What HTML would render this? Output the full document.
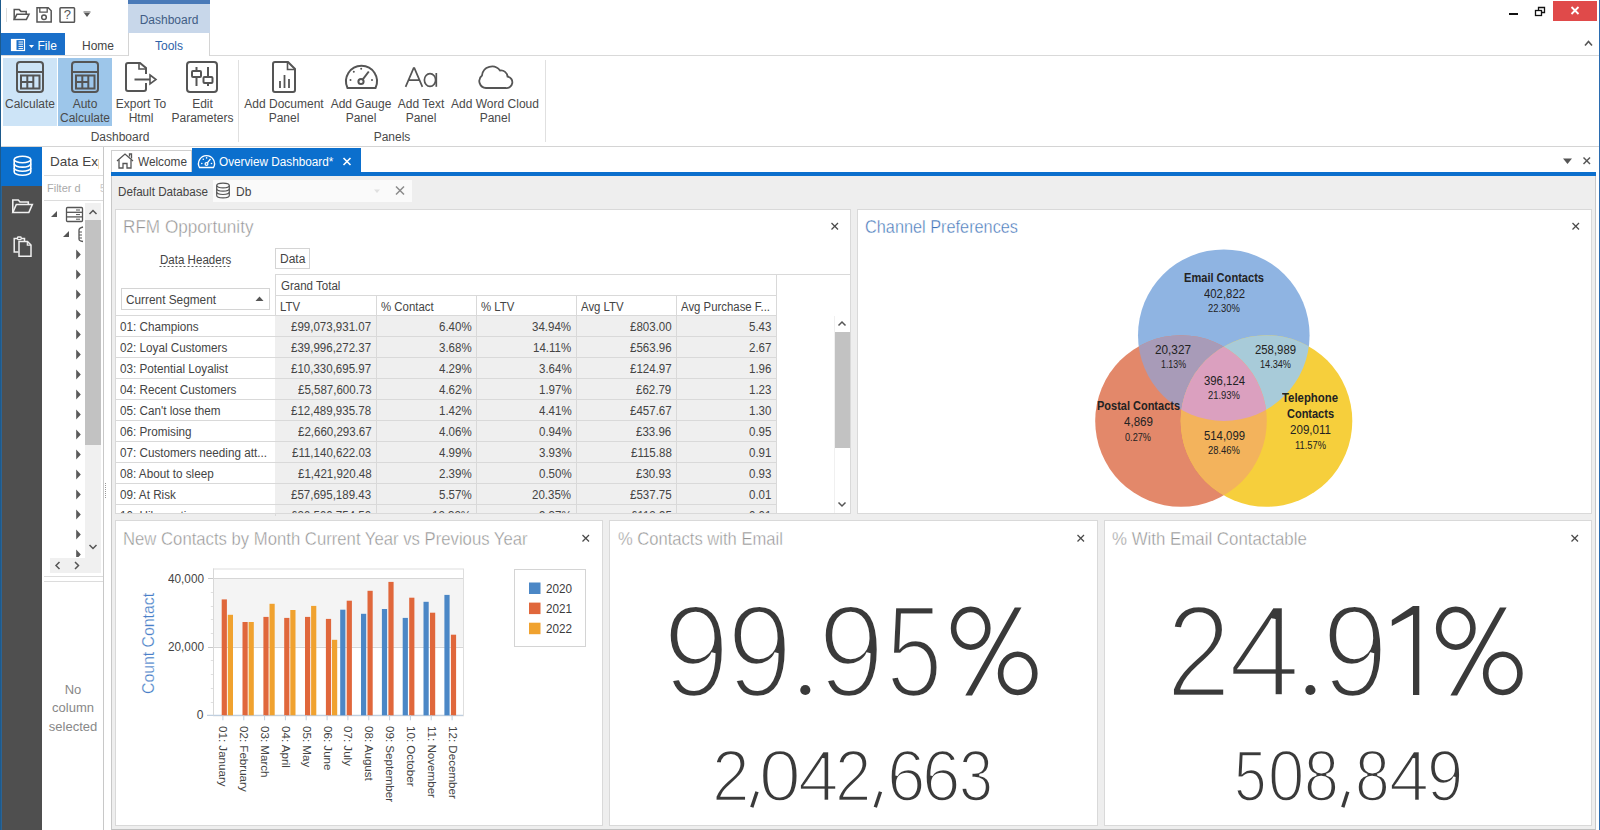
<!DOCTYPE html>
<html><head><meta charset="utf-8">
<style>
*{box-sizing:border-box;margin:0;padding:0}
html,body{width:1600px;height:830px;overflow:hidden;background:#fff;font-family:"Liberation Sans",sans-serif;color:#333}
.a{position:absolute}
.t{position:absolute;white-space:nowrap;line-height:1}
svg{position:absolute;overflow:visible}
</style></head><body>
<div class="a" style="left:0px;top:0px;width:1px;height:830px;background:#1d5a8c;"></div>
<div class="a" style="left:1599px;top:0px;width:1px;height:830px;background:#2b6cb0;"></div>
<svg style="left:0;top:0" width="100" height="30" fill="none" stroke="#555" stroke-width="1.5">
<line x1="6.5" y1="8" x2="6.5" y2="22" stroke="#ddd" stroke-width="1"/>
<path d="M14.2 19.4 V9.6 H19.2 L21 11.4 H26.2 V14"/>
<path d="M14.2 19.4 L16.9 14.3 H29 L26.4 19.4 Z"/>
<path d="M37 7.8 H48.2 L51.2 10.8 V22 H37 Z"/>
<path d="M39.8 7.8 V12.2 H47.2 V7.8" stroke-width="1.3"/>
<circle cx="44" cy="17.3" r="2.3"/>
<rect x="60" y="7.8" width="14.5" height="14.5" rx="0.8"/>
<path d="M84 13 H90 L87 17 Z" fill="#555" stroke="none"/>
<line x1="83.5" y1="12" x2="90.5" y2="12" stroke-width="1"/>
</svg>
<div class="t" style="left:63.69px;top:8.49px;font-size:13.00px;color:#555;">?</div>
<div class="a" style="left:1509px;top:13px;width:9px;height:2px;background:#111;"></div>
<svg style="left:1530px;top:0" width="20" height="20" fill="none" stroke="#111" stroke-width="1.3">
<rect x="5.5" y="10.5" width="6" height="5"/><path d="M8.5 10.5 V7.5 H14.5 V12.5 H11.5"/></svg>
<div class="a" style="left:1553px;top:1px;width:44px;height:20px;background:#e04a4a;"></div>
<svg style="left:1553px;top:1px" width="44" height="20" stroke="#fff" stroke-width="1.8">
<line x1="18.5" y1="6" x2="25.5" y2="13"/><line x1="25.5" y1="6" x2="18.5" y2="13"/></svg>
<svg style="left:1580px;top:35px" width="16" height="16" fill="none" stroke="#555" stroke-width="1.6">
<path d="M5 10.5 L8.5 6.5 L12 10.5"/></svg>
<div class="a" style="left:128px;top:0px;width:82px;height:4px;background:#4a7ab8;"></div>
<div class="a" style="left:128px;top:4px;width:82px;height:29px;background:#c8d7ea;"></div>
<div class="t" style="left:139.65px;top:13.64px;font-size:12.00px;color:#415d85;">Dashboard</div>
<div class="a" style="left:1px;top:33px;width:64px;height:22px;background:#1a6fc9;"></div>
<svg style="left:0;top:33px" width="65" height="22">
<rect x="11.5" y="6.5" width="13" height="11" fill="none" stroke="#fff" stroke-width="1.2"/>
<rect x="12" y="7" width="4.5" height="10" fill="#fff"/>
<line x1="18.5" y1="9" x2="23" y2="9" stroke="#fff" stroke-width="1"/>
<line x1="18.5" y1="11.2" x2="23" y2="11.2" stroke="#fff" stroke-width="1"/>
<line x1="18.5" y1="13.4" x2="23" y2="13.4" stroke="#fff" stroke-width="1"/>
<line x1="18.5" y1="15.6" x2="23" y2="15.6" stroke="#fff" stroke-width="1"/>
<path d="M29 12 H34 L31.5 15 Z" fill="#fff"/></svg>
<div class="t" style="left:37.50px;top:39.84px;font-size:12.00px;color:#fff;">File</div>
<div class="t" style="left:82.00px;top:39.84px;font-size:12.00px;color:#444;">Home</div>
<div class="a" style="left:128px;top:33px;width:82px;height:23px;background:#fff;border-left:1px solid #d4d4d4;border-right:1px solid #d4d4d4"></div>
<div class="t" style="left:154.99px;top:39.84px;font-size:12.00px;color:#2e62a8;">Tools</div>
<div class="a" style="left:1px;top:55px;width:127px;height:1px;background:#d9d9d9;"></div>
<div class="a" style="left:210px;top:55px;width:1389px;height:1px;background:#d9d9d9;"></div>
<div class="a" style="left:3px;top:58px;width:54px;height:68px;background:#cde4f7;"></div>
<div class="a" style="left:58px;top:58px;width:54px;height:68px;background:#9dc6ea;"></div>
<svg class="a" style="left:0;top:0" width="600" height="146" viewBox="0 0 600 146" fill="none" stroke="#555" stroke-width="2">
 <!-- calc -->
 <rect x="17" y="62" width="26" height="30" rx="3"/>
 <line x1="17" y1="72" x2="43" y2="72"/>
 <rect x="21" y="75.5" width="18.5" height="13"/>
 <line x1="27.3" y1="75.5" x2="27.3" y2="88.5"/><line x1="33.3" y1="75.5" x2="33.3" y2="88.5"/>
 <line x1="21" y1="82" x2="33.3" y2="82"/>
 <!-- auto calc -->
 <rect x="72" y="62" width="26" height="30" rx="3"/>
 <line x1="72" y1="72" x2="98" y2="72"/>
 <rect x="76" y="75.5" width="18.5" height="13"/>
 <line x1="82.3" y1="75.5" x2="82.3" y2="88.5"/><line x1="88.3" y1="75.5" x2="88.3" y2="88.5"/>
 <line x1="76" y1="82" x2="88.3" y2="82"/>
 <!-- export -->
 <path d="M146 74 V68 L140 63 H128 Q126 63 126 65 V89 Q126 91 128 91 H144 Q146 91 146 89 V83"/>
 <path d="M139 63 V69 H146" stroke-width="1.6"/>
 <line x1="134.5" y1="79.5" x2="150" y2="79.5"/>
 <path d="M150 75 L156 79.5 L150 84 Z" stroke-width="1.6"/>
 <!-- edit params -->
 <rect x="187" y="62" width="30" height="30" rx="3"/>
 <line x1="196.5" y1="67" x2="196.5" y2="86"/>
 <rect x="192" y="71" width="9" height="6" rx="1" fill="#fff"/>
 <line x1="208" y1="67" x2="208" y2="86"/>
 <rect x="203.5" y="77" width="9" height="6" rx="1" fill="#fff"/>
 <!-- doc -->
 <path d="M288 62 H275 Q273 62 273 64 V90 Q273 92 275 92 H293 Q295 92 295 90 V69 Z"/>
 <path d="M287.5 62 V69.5 H295" stroke-width="1.6"/>
 <line x1="280" y1="81" x2="280" y2="88" stroke-width="1.8"/>
 <line x1="284.5" y1="75" x2="284.5" y2="88" stroke-width="1.8"/>
 <line x1="289" y1="79" x2="289" y2="88" stroke-width="1.8"/>
 <!-- gauge -->
 <path d="M347.5 88 A15.5 15.5 0 1 1 375.5 88 Z"/>
 <circle cx="361" cy="81.5" r="2.6"/>
 <line x1="362.8" y1="79.3" x2="368.8" y2="71.5"/>
 <circle cx="350.5" cy="80" r="1" fill="#555" stroke="none"/>
 <circle cx="353.8" cy="71.8" r="1" fill="#555" stroke="none"/>
 <circle cx="361.2" cy="68.8" r="1" fill="#555" stroke="none"/>
 <circle cx="372" cy="80" r="1" fill="#555" stroke="none"/>
 <!-- cloud -->
 <path d="M486 88 A7 7 0 0 1 482 75.5 A10 10 0 0 1 500 70.5 A6.5 6.5 0 0 1 507.5 76.5 A5.8 5.8 0 0 1 505.5 88 Z" stroke-width="1.8"/>
 <!-- separators -->
 <line x1="238.5" y1="60" x2="238.5" y2="142" stroke="#e0e0e0" stroke-width="1"/>
 <line x1="545.5" y1="60" x2="545.5" y2="142" stroke="#e0e0e0" stroke-width="1"/>
</svg>
<svg style="left:0;top:0" width="600" height="146" fill="none" stroke="#555" stroke-width="1.7"><path d="M405.6 86.8 L413.6 68.2 H414.4 L422.4 86.8 M408.3 80.2 H419.7"/><ellipse cx="430" cy="80" rx="5.6" ry="6.4"/><line x1="436.3" y1="73" x2="436.3" y2="86.8"/></svg>
<div class="t" style="left:4.99px;top:98.34px;font-size:12.00px;color:#4a4a4a;">Calculate</div>
<div class="t" style="left:72.66px;top:98.34px;font-size:12.00px;color:#4a4a4a;">Auto</div>
<div class="t" style="left:59.99px;top:112.09px;font-size:12.00px;color:#4a4a4a;">Calculate</div>
<div class="t" style="left:115.77px;top:98.34px;font-size:12.00px;color:#4a4a4a;">Export To</div>
<div class="t" style="left:128.67px;top:112.09px;font-size:12.00px;color:#4a4a4a;">Html</div>
<div class="t" style="left:192.16px;top:98.34px;font-size:12.00px;color:#4a4a4a;">Edit</div>
<div class="t" style="left:171.49px;top:112.09px;font-size:12.00px;color:#4a4a4a;">Parameters</div>
<div class="t" style="left:244.31px;top:98.34px;font-size:12.00px;color:#4a4a4a;">Add Document</div>
<div class="t" style="left:268.65px;top:112.09px;font-size:12.00px;color:#4a4a4a;">Panel</div>
<div class="t" style="left:330.64px;top:98.34px;font-size:12.00px;color:#4a4a4a;">Add Gauge</div>
<div class="t" style="left:345.65px;top:112.09px;font-size:12.00px;color:#4a4a4a;">Panel</div>
<div class="t" style="left:397.76px;top:98.34px;font-size:12.00px;color:#4a4a4a;">Add Text</div>
<div class="t" style="left:405.65px;top:112.09px;font-size:12.00px;color:#4a4a4a;">Panel</div>
<div class="t" style="left:451.09px;top:98.34px;font-size:12.00px;color:#4a4a4a;">Add Word Cloud</div>
<div class="t" style="left:479.65px;top:112.09px;font-size:12.00px;color:#4a4a4a;">Panel</div>
<div class="t" style="left:90.65px;top:131.24px;font-size:12.00px;color:#4a4a4a;">Dashboard</div>
<div class="t" style="left:373.65px;top:131.24px;font-size:12.00px;color:#4a4a4a;">Panels</div>
<div class="a" style="left:1px;top:146px;width:1598px;height:1px;background:#d4d4d4;"></div>
<div class="a" style="left:1px;top:147px;width:41px;height:683px;background:#4f4f4f;"></div>
<div class="a" style="left:1px;top:186px;width:1px;height:644px;background:#2a6496;"></div>
<div class="a" style="left:1px;top:147px;width:41px;height:39px;background:#0b6fcd;"></div>
<svg style="left:0;top:140px" width="42" height="130" fill="none" stroke="#fff" stroke-width="1.6">
<ellipse cx="22.5" cy="19.5" rx="8.3" ry="3.3"/>
<path d="M14.2 19.5 V32 A8.3 3.3 0 0 0 30.8 32 V19.5"/>
<path d="M14.2 23.8 A8.3 3.3 0 0 0 30.8 23.8"/>
<path d="M14.2 28 A8.3 3.3 0 0 0 30.8 28"/>
<g stroke="#f0f0f0" stroke-width="1.4">
<path d="M12.8 72.5 V60 H18.3 L20 62 H28.3 V64.5" stroke-width="1.6"/>
<path d="M12.8 72.5 L16.3 64.5 H32.3 L28.8 72.5 Z" stroke-width="1.6"/>
<path d="M18.5 112 H14.2 V98.6 H17.5 M21.2 98.6 H24.5 V101.5" stroke-width="1.5"/>
<rect x="17.5" y="97" width="3.7" height="2.6" rx="0.8" stroke-width="1.3"/>
<path d="M19 101.5 H27.5 L31 105 V116.3 H19 Z" stroke-width="1.5"/>
<path d="M27.3 101.5 V105.2 H31" stroke-width="1.2"/>
</g></svg>
<div class="a" style="left:42px;top:147px;width:61px;height:683px;background:#fff;"></div>
<div class="a" style="left:42px;top:147px;width:56.5px;height:28px;overflow:hidden">
<div class="t" style="left:8.00px;top:7.57px;font-size:13.50px;color:#444;">Data Exp</div>
</div>
<div class="a" style="left:44px;top:175px;width:59px;height:1px;background:#dcdcdc;"></div>
<div class="t" style="left:47.00px;top:183.19px;font-size:11.00px;color:#aaa;">Filter d</div>
<div class="a" style="left:98px;top:180px;width:5px;height:18px;overflow:hidden">
<div class="t" style="left:2.00px;top:4.03px;font-size:10.00px;color:#c8c8c8;">5</div>
</div>
<div class="a" style="left:44px;top:200px;width:59px;height:1px;background:#dcdcdc;"></div>
<svg style="left:42px;top:200px;overflow:hidden" width="43" height="357">
<path d="M15 11 L9 17 H15 Z" fill="#555"/>
<g fill="none" stroke="#555" stroke-width="1.3"><rect x="24.5" y="7.5" width="16" height="14" rx="1"/>
<line x1="24.5" y1="12.3" x2="40.5" y2="12.3"/><line x1="24.5" y1="16.9" x2="40.5" y2="16.9"/></g>
<g stroke="#555" stroke-width="1"><line x1="34" y1="10" x2="38" y2="10"/><line x1="34" y1="14.6" x2="38" y2="14.6"/><line x1="34" y1="19.2" x2="38" y2="19.2"/></g>
<path d="M27 31 L21 37 H27 Z" fill="#555"/>
<g fill="none" stroke="#555" stroke-width="1.3"><path d="M41 27 Q37 28 37 30 V39 Q37 41 41 41.5"/><path d="M37 32 H40 M37 35 H40 M37 38 H40" stroke-width="1"/></g>
<path d="M34.2 49.5 L38.8 54.5 L34.2 59.5 Z" fill="#5a5a5a"/><path d="M34.2 69.5 L38.8 74.5 L34.2 79.5 Z" fill="#5a5a5a"/><path d="M34.2 89.5 L38.8 94.5 L34.2 99.5 Z" fill="#5a5a5a"/><path d="M34.2 109.5 L38.8 114.5 L34.2 119.5 Z" fill="#5a5a5a"/><path d="M34.2 129.5 L38.8 134.5 L34.2 139.5 Z" fill="#5a5a5a"/><path d="M34.2 149.5 L38.8 154.5 L34.2 159.5 Z" fill="#5a5a5a"/><path d="M34.2 169.5 L38.8 174.5 L34.2 179.5 Z" fill="#5a5a5a"/><path d="M34.2 189.5 L38.8 194.5 L34.2 199.5 Z" fill="#5a5a5a"/><path d="M34.2 209.5 L38.8 214.5 L34.2 219.5 Z" fill="#5a5a5a"/><path d="M34.2 229.5 L38.8 234.5 L34.2 239.5 Z" fill="#5a5a5a"/><path d="M34.2 249.5 L38.8 254.5 L34.2 259.5 Z" fill="#5a5a5a"/><path d="M34.2 269.5 L38.8 274.5 L34.2 279.5 Z" fill="#5a5a5a"/><path d="M34.2 289.5 L38.8 294.5 L34.2 299.5 Z" fill="#5a5a5a"/><path d="M34.2 309.5 L38.8 314.5 L34.2 319.5 Z" fill="#5a5a5a"/><path d="M34.2 329.5 L38.8 334.5 L34.2 339.5 Z" fill="#5a5a5a"/><path d="M34.2 349.5 L38.8 354.5 L34.2 359.5 Z" fill="#5a5a5a"/>
</svg>
<div class="a" style="left:85px;top:203px;width:16px;height:355px;background:#f0f0f0;"></div>
<div class="a" style="left:85px;top:220px;width:16px;height:225px;background:#c2c2c2;"></div>
<svg style="left:85px;top:203px" width="16" height="360" fill="none" stroke="#555" stroke-width="1.5">
<path d="M4.5 11 L8 7.5 L11.5 11"/><path d="M4.5 342 L8 345.5 L11.5 342"/></svg>
<div class="a" style="left:50px;top:558px;width:51px;height:15px;background:#f0f0f0;"></div>
<svg style="left:50px;top:558px" width="51" height="15" fill="none" stroke="#555" stroke-width="1.5">
<path d="M9.5 4 L6 7.5 L9.5 11"/><path d="M25 4 L28.5 7.5 L25 11"/></svg>
<div class="a" style="left:44px;top:576px;width:59px;height:1px;background:#dcdcdc;"></div>
<div class="a" style="left:44px;top:581px;width:59px;height:1px;background:#dcdcdc;"></div>
<div class="t" style="left:64.69px;top:682.99px;font-size:13.00px;color:#888;">No</div>
<div class="t" style="left:52.05px;top:700.99px;font-size:13.00px;color:#888;">column</div>
<div class="t" style="left:48.79px;top:719.99px;font-size:13.00px;color:#888;">selected</div>
<div class="a" style="left:103px;top:147px;width:1px;height:683px;background:#c8c8c8;"></div>
<svg style="left:104px;top:480px" width="4" height="20"><g fill="#999"><rect x="1" y="3" width="1" height="1"/><rect x="1" y="5" width="1" height="1"/><rect x="1" y="7" width="1" height="1"/><rect x="1" y="9" width="1" height="1"/><rect x="1" y="11" width="1" height="1"/><rect x="1" y="13" width="1" height="1"/><rect x="1" y="15" width="1" height="1"/><rect x="1" y="17" width="1" height="1"/></g></svg>
<div class="a" style="left:111px;top:150px;width:81px;height:22px;background:#fff;border:1px solid #cfcfcf;border-bottom:none"></div>
<svg style="left:111px;top:148px" width="30" height="24" fill="none" stroke="#555" stroke-width="1.3">
<path d="M6 13 L14 6 L22 13"/><path d="M8 12 V20 H12 V15.5 H16 V20 H20 V12"/><path d="M18.5 8.5 V6 H20.5 V10.5"/></svg>
<div class="t" style="left:138.00px;top:156.14px;font-size:12.00px;color:#444;transform:scaleX(0.9841);transform-origin:0 0;">Welcome</div>
<div class="a" style="left:192px;top:148px;width:169px;height:24px;background:#0b6fcd;"></div>
<svg style="left:192px;top:148px" width="30" height="24" fill="none" stroke="#fff" stroke-width="1.3">
<path d="M7.5 19.5 A8 8 0 1 1 21.5 19.5 Z"/><circle cx="14.5" cy="16" r="1.4"/><line x1="15.4" y1="14.8" x2="18.5" y2="10.8"/>
<g fill="#fff" stroke="none"><circle cx="9.8" cy="15.5" r="0.8"/><circle cx="11.3" cy="11.3" r="0.8"/><circle cx="14.6" cy="9.9" r="0.8"/><circle cx="19.5" cy="15.5" r="0.8"/></g></svg>
<div class="t" style="left:219.30px;top:156.04px;font-size:12.00px;color:#fff;transform:scaleX(0.9802);transform-origin:0 0;">Overview Dashboard*</div>
<svg style="left:340px;top:155px" width="14" height="14" stroke="#fff" stroke-width="1.6">
<line x1="3.5" y1="3" x2="10.5" y2="10"/><line x1="10.5" y1="3" x2="3.5" y2="10"/></svg>
<svg style="left:1558px;top:150px" width="40" height="20">
<path d="M5 8.5 H14 L9.5 14 Z" fill="#555"/>
<g stroke="#555" stroke-width="1.4"><line x1="25.5" y1="7.5" x2="32" y2="14"/><line x1="32" y1="7.5" x2="25.5" y2="14"/></g></svg>
<div class="a" style="left:111px;top:172px;width:1485px;height:4px;background:#0b6fcd;"></div>
<div class="a" style="left:111px;top:176px;width:1485px;height:654px;background:#eeeeee;border-left:1px solid #c8c8c8;border-right:1px solid #c8c8c8;border-bottom:1px solid #c0c0c0"></div>
<div class="t" style="left:117.50px;top:186.04px;font-size:12.00px;color:#444;transform:scaleX(0.9707);transform-origin:0 0;">Default Database</div>
<div class="a" style="left:213px;top:180px;width:199px;height:22px;background:#fafafa;"></div>
<svg style="left:213px;top:180px" width="199" height="22" fill="none" stroke="#555" stroke-width="1.2">
<ellipse cx="10" cy="5.5" rx="6.3" ry="2.4"/>
<path d="M3.7 5.5 V15.5 A6.3 2.4 0 0 0 16.3 15.5 V5.5"/>
<path d="M3.7 8.8 A6.3 2.4 0 0 0 16.3 8.8"/><path d="M3.7 12.1 A6.3 2.4 0 0 0 16.3 12.1"/>
<path d="M161 9.5 H167 L164 13 Z" fill="#e0e0e0" stroke="none"/>
<g stroke="#888" stroke-width="1.4"><line x1="183" y1="6.5" x2="191" y2="14.5"/><line x1="191" y1="6.5" x2="183" y2="14.5"/></g>
</svg>
<div class="t" style="left:236.00px;top:186.14px;font-size:12.00px;color:#444;">Db</div>
<div class="a" style="left:115px;top:209px;width:736px;height:305px;background:#fff;border:1px solid #d9d9d9"></div>
<div class="t" style="left:123.00px;top:219.28px;font-size:17.50px;color:#939393;transform:scaleX(0.9796);transform-origin:0 0;-webkit-text-stroke:0.4px #fff;">RFM Opportunity</div>
<svg style="left:829.5px;top:221.5px" width="10" height="10" stroke="#4a4a4a" stroke-width="1.3"><line x1="1.5" y1="1" x2="8" y2="7.5"/><line x1="8" y1="1" x2="1.5" y2="7.5"/></svg>
<div class="a" style="left:857px;top:209px;width:735px;height:305px;background:#fff;border:1px solid #d9d9d9"></div>
<div class="t" style="left:865.30px;top:219.28px;font-size:17.50px;color:#3f74b8;transform:scaleX(0.9307);transform-origin:0 0;-webkit-text-stroke:0.4px #fff;">Channel Preferences</div>
<svg style="left:1571px;top:221.5px" width="10" height="10" stroke="#4a4a4a" stroke-width="1.3"><line x1="1.5" y1="1" x2="8" y2="7.5"/><line x1="8" y1="1" x2="1.5" y2="7.5"/></svg>
<div class="a" style="left:115px;top:520px;width:488px;height:306px;background:#fff;border:1px solid #d9d9d9"></div>
<div class="t" style="left:122.50px;top:530.83px;font-size:17.80px;color:#939393;transform:scaleX(0.9389);transform-origin:0 0;-webkit-text-stroke:0.4px #fff;">New Contacts by Month Current Year vs Previous Year</div>
<svg style="left:581px;top:533.5px" width="10" height="10" stroke="#4a4a4a" stroke-width="1.3"><line x1="1.5" y1="1" x2="8" y2="7.5"/><line x1="8" y1="1" x2="1.5" y2="7.5"/></svg>
<div class="a" style="left:609px;top:520px;width:489px;height:306px;background:#fff;border:1px solid #d9d9d9"></div>
<div class="t" style="left:618.30px;top:530.83px;font-size:17.80px;color:#939393;transform:scaleX(0.9319);transform-origin:0 0;-webkit-text-stroke:0.4px #fff;">% Contacts with Email</div>
<svg style="left:1076px;top:533.5px" width="10" height="10" stroke="#4a4a4a" stroke-width="1.3"><line x1="1.5" y1="1" x2="8" y2="7.5"/><line x1="8" y1="1" x2="1.5" y2="7.5"/></svg>
<div class="a" style="left:1104px;top:520px;width:488px;height:306px;background:#fff;border:1px solid #d9d9d9"></div>
<div class="t" style="left:1112.30px;top:530.83px;font-size:17.80px;color:#939393;transform:scaleX(0.9477);transform-origin:0 0;-webkit-text-stroke:0.4px #fff;">% With Email Contactable</div>
<svg style="left:1570px;top:533.5px" width="10" height="10" stroke="#4a4a4a" stroke-width="1.3"><line x1="1.5" y1="1" x2="8" y2="7.5"/><line x1="8" y1="1" x2="1.5" y2="7.5"/></svg>
<div class="t" style="left:159.70px;top:254.34px;font-size:12.00px;color:#444;transform:scaleX(0.9631);transform-origin:0 0;">Data Headers</div>
<svg style="left:159px;top:265px" width="74" height="3"><line x1="0.5" y1="1.5" x2="72" y2="1.5" stroke="#555" stroke-width="1" stroke-dasharray="2 2"/></svg>
<div class="a" style="left:275px;top:248px;width:35px;height:21px;background:#fff;border:1px solid #d4d4d4"></div>
<div class="t" style="left:280.00px;top:252.84px;font-size:12.00px;color:#444;">Data</div>
<div class="a" style="left:121px;top:288px;width:149px;height:22px;background:#fff;border:1px solid #d4d4d4"></div>
<div class="t" style="left:126.00px;top:293.84px;font-size:12.00px;color:#444;transform:scaleX(0.9850);transform-origin:0 0;">Current Segment</div>
<svg style="left:253px;top:294px" width="12" height="10"><path d="M2.5 7 L6.5 2.5 L10.5 7 Z" fill="#555"/></svg>
<div class="a" style="left:275px;top:274px;width:576px;height:1px;background:#d9d9d9;"></div>
<div class="a" style="left:275px;top:274px;width:1px;height:242px;background:#d9d9d9;"></div>
<div class="a" style="left:776px;top:274px;width:1px;height:42px;background:#d9d9d9;"></div>
<div class="a" style="left:275px;top:295px;width:502px;height:1px;background:#d9d9d9;"></div>
<div class="a" style="left:376px;top:295px;width:1px;height:21px;background:#d9d9d9;"></div>
<div class="a" style="left:476px;top:295px;width:1px;height:21px;background:#d9d9d9;"></div>
<div class="a" style="left:576px;top:295px;width:1px;height:21px;background:#d9d9d9;"></div>
<div class="a" style="left:676px;top:295px;width:1px;height:21px;background:#d9d9d9;"></div>
<div class="t" style="left:280.50px;top:279.84px;font-size:12.00px;color:#444;transform:scaleX(0.9600);transform-origin:0 0;">Grand Total</div>
<div class="t" style="left:280.00px;top:300.84px;font-size:12.00px;color:#444;transform:scaleX(0.9500);transform-origin:0 0;">LTV</div>
<div class="t" style="left:381.00px;top:300.84px;font-size:12.00px;color:#444;transform:scaleX(0.9500);transform-origin:0 0;">% Contact</div>
<div class="t" style="left:481.00px;top:300.84px;font-size:12.00px;color:#444;transform:scaleX(0.9500);transform-origin:0 0;">% LTV</div>
<div class="t" style="left:581.00px;top:300.84px;font-size:12.00px;color:#444;transform:scaleX(0.9500);transform-origin:0 0;">Avg LTV</div>
<div class="t" style="left:681.00px;top:300.84px;font-size:12.00px;color:#444;transform:scaleX(0.9486);transform-origin:0 0;">Avg Purchase F...</div>
<div class="a" style="left:116px;top:315px;width:661px;height:1px;background:#d9d9d9;"></div>
<div class="a" style="left:116px;top:316px;width:718px;height:197px;overflow:hidden">
<div class="a" style="left:159px;top:0px;width:501px;height:21px;background:#efefef;"></div>
<div class="a" style="left:0px;top:20px;width:661px;height:1px;background:#d9d9d9;"></div>
<div class="a" style="left:260px;top:0px;width:1px;height:21px;background:#d9d9d9;"></div>
<div class="a" style="left:360px;top:0px;width:1px;height:21px;background:#d9d9d9;"></div>
<div class="a" style="left:460px;top:0px;width:1px;height:21px;background:#d9d9d9;"></div>
<div class="a" style="left:560px;top:0px;width:1px;height:21px;background:#d9d9d9;"></div>
<div class="a" style="left:660px;top:0px;width:1px;height:21px;background:#d9d9d9;"></div>
<div class="t" style="left:4.00px;top:5.34px;font-size:12.00px;color:#444;transform:scaleX(0.9750);transform-origin:0 0;">01: Champions</div>
<div class="t" style="left:175.43px;top:5.34px;font-size:12.00px;color:#444;transform:scaleX(0.9600);transform-origin:0 0;">£99,073,931.07</div>
<div class="t" style="left:322.84px;top:5.34px;font-size:12.00px;color:#444;transform:scaleX(0.9600);transform-origin:0 0;">6.40%</div>
<div class="t" style="left:416.43px;top:5.34px;font-size:12.00px;color:#444;transform:scaleX(0.9600);transform-origin:0 0;">34.94%</div>
<div class="t" style="left:513.86px;top:5.34px;font-size:12.00px;color:#444;transform:scaleX(0.9600);transform-origin:0 0;">£803.00</div>
<div class="t" style="left:633.08px;top:5.34px;font-size:12.00px;color:#444;transform:scaleX(0.9600);transform-origin:0 0;">5.43</div>
<div class="a" style="left:159px;top:21px;width:501px;height:21px;background:#efefef;"></div>
<div class="a" style="left:0px;top:41px;width:661px;height:1px;background:#d9d9d9;"></div>
<div class="a" style="left:260px;top:21px;width:1px;height:21px;background:#d9d9d9;"></div>
<div class="a" style="left:360px;top:21px;width:1px;height:21px;background:#d9d9d9;"></div>
<div class="a" style="left:460px;top:21px;width:1px;height:21px;background:#d9d9d9;"></div>
<div class="a" style="left:560px;top:21px;width:1px;height:21px;background:#d9d9d9;"></div>
<div class="a" style="left:660px;top:21px;width:1px;height:21px;background:#d9d9d9;"></div>
<div class="t" style="left:4.00px;top:26.34px;font-size:12.00px;color:#444;transform:scaleX(0.9750);transform-origin:0 0;">02: Loyal Customers</div>
<div class="t" style="left:175.43px;top:26.34px;font-size:12.00px;color:#444;transform:scaleX(0.9600);transform-origin:0 0;">£39,996,272.37</div>
<div class="t" style="left:322.84px;top:26.34px;font-size:12.00px;color:#444;transform:scaleX(0.9600);transform-origin:0 0;">3.68%</div>
<div class="t" style="left:417.29px;top:26.34px;font-size:12.00px;color:#444;transform:scaleX(0.9600);transform-origin:0 0;">14.11%</div>
<div class="t" style="left:513.86px;top:26.34px;font-size:12.00px;color:#444;transform:scaleX(0.9600);transform-origin:0 0;">£563.96</div>
<div class="t" style="left:633.08px;top:26.34px;font-size:12.00px;color:#444;transform:scaleX(0.9600);transform-origin:0 0;">2.67</div>
<div class="a" style="left:159px;top:42px;width:501px;height:21px;background:#efefef;"></div>
<div class="a" style="left:0px;top:62px;width:661px;height:1px;background:#d9d9d9;"></div>
<div class="a" style="left:260px;top:42px;width:1px;height:21px;background:#d9d9d9;"></div>
<div class="a" style="left:360px;top:42px;width:1px;height:21px;background:#d9d9d9;"></div>
<div class="a" style="left:460px;top:42px;width:1px;height:21px;background:#d9d9d9;"></div>
<div class="a" style="left:560px;top:42px;width:1px;height:21px;background:#d9d9d9;"></div>
<div class="a" style="left:660px;top:42px;width:1px;height:21px;background:#d9d9d9;"></div>
<div class="t" style="left:4.00px;top:47.34px;font-size:12.00px;color:#444;transform:scaleX(0.9750);transform-origin:0 0;">03: Potential Loyalist</div>
<div class="t" style="left:175.43px;top:47.34px;font-size:12.00px;color:#444;transform:scaleX(0.9600);transform-origin:0 0;">£10,330,695.97</div>
<div class="t" style="left:322.84px;top:47.34px;font-size:12.00px;color:#444;transform:scaleX(0.9600);transform-origin:0 0;">4.29%</div>
<div class="t" style="left:422.84px;top:47.34px;font-size:12.00px;color:#444;transform:scaleX(0.9600);transform-origin:0 0;">3.64%</div>
<div class="t" style="left:513.86px;top:47.34px;font-size:12.00px;color:#444;transform:scaleX(0.9600);transform-origin:0 0;">£124.97</div>
<div class="t" style="left:633.08px;top:47.34px;font-size:12.00px;color:#444;transform:scaleX(0.9600);transform-origin:0 0;">1.96</div>
<div class="a" style="left:159px;top:63px;width:501px;height:21px;background:#efefef;"></div>
<div class="a" style="left:0px;top:83px;width:661px;height:1px;background:#d9d9d9;"></div>
<div class="a" style="left:260px;top:63px;width:1px;height:21px;background:#d9d9d9;"></div>
<div class="a" style="left:360px;top:63px;width:1px;height:21px;background:#d9d9d9;"></div>
<div class="a" style="left:460px;top:63px;width:1px;height:21px;background:#d9d9d9;"></div>
<div class="a" style="left:560px;top:63px;width:1px;height:21px;background:#d9d9d9;"></div>
<div class="a" style="left:660px;top:63px;width:1px;height:21px;background:#d9d9d9;"></div>
<div class="t" style="left:4.00px;top:68.34px;font-size:12.00px;color:#444;transform:scaleX(0.9750);transform-origin:0 0;">04: Recent Customers</div>
<div class="t" style="left:181.84px;top:68.34px;font-size:12.00px;color:#444;transform:scaleX(0.9600);transform-origin:0 0;">£5,587,600.73</div>
<div class="t" style="left:322.84px;top:68.34px;font-size:12.00px;color:#444;transform:scaleX(0.9600);transform-origin:0 0;">4.62%</div>
<div class="t" style="left:422.84px;top:68.34px;font-size:12.00px;color:#444;transform:scaleX(0.9600);transform-origin:0 0;">1.97%</div>
<div class="t" style="left:520.27px;top:68.34px;font-size:12.00px;color:#444;transform:scaleX(0.9600);transform-origin:0 0;">£62.79</div>
<div class="t" style="left:633.08px;top:68.34px;font-size:12.00px;color:#444;transform:scaleX(0.9600);transform-origin:0 0;">1.23</div>
<div class="a" style="left:159px;top:84px;width:501px;height:21px;background:#efefef;"></div>
<div class="a" style="left:0px;top:104px;width:661px;height:1px;background:#d9d9d9;"></div>
<div class="a" style="left:260px;top:84px;width:1px;height:21px;background:#d9d9d9;"></div>
<div class="a" style="left:360px;top:84px;width:1px;height:21px;background:#d9d9d9;"></div>
<div class="a" style="left:460px;top:84px;width:1px;height:21px;background:#d9d9d9;"></div>
<div class="a" style="left:560px;top:84px;width:1px;height:21px;background:#d9d9d9;"></div>
<div class="a" style="left:660px;top:84px;width:1px;height:21px;background:#d9d9d9;"></div>
<div class="t" style="left:4.00px;top:89.34px;font-size:12.00px;color:#444;transform:scaleX(0.9750);transform-origin:0 0;">05: Can't lose them</div>
<div class="t" style="left:175.43px;top:89.34px;font-size:12.00px;color:#444;transform:scaleX(0.9600);transform-origin:0 0;">£12,489,935.78</div>
<div class="t" style="left:322.84px;top:89.34px;font-size:12.00px;color:#444;transform:scaleX(0.9600);transform-origin:0 0;">1.42%</div>
<div class="t" style="left:422.84px;top:89.34px;font-size:12.00px;color:#444;transform:scaleX(0.9600);transform-origin:0 0;">4.41%</div>
<div class="t" style="left:513.86px;top:89.34px;font-size:12.00px;color:#444;transform:scaleX(0.9600);transform-origin:0 0;">£457.67</div>
<div class="t" style="left:633.08px;top:89.34px;font-size:12.00px;color:#444;transform:scaleX(0.9600);transform-origin:0 0;">1.30</div>
<div class="a" style="left:159px;top:105px;width:501px;height:21px;background:#efefef;"></div>
<div class="a" style="left:0px;top:125px;width:661px;height:1px;background:#d9d9d9;"></div>
<div class="a" style="left:260px;top:105px;width:1px;height:21px;background:#d9d9d9;"></div>
<div class="a" style="left:360px;top:105px;width:1px;height:21px;background:#d9d9d9;"></div>
<div class="a" style="left:460px;top:105px;width:1px;height:21px;background:#d9d9d9;"></div>
<div class="a" style="left:560px;top:105px;width:1px;height:21px;background:#d9d9d9;"></div>
<div class="a" style="left:660px;top:105px;width:1px;height:21px;background:#d9d9d9;"></div>
<div class="t" style="left:4.00px;top:110.34px;font-size:12.00px;color:#444;transform:scaleX(0.9750);transform-origin:0 0;">06: Promising</div>
<div class="t" style="left:181.84px;top:110.34px;font-size:12.00px;color:#444;transform:scaleX(0.9600);transform-origin:0 0;">£2,660,293.67</div>
<div class="t" style="left:322.84px;top:110.34px;font-size:12.00px;color:#444;transform:scaleX(0.9600);transform-origin:0 0;">4.06%</div>
<div class="t" style="left:422.84px;top:110.34px;font-size:12.00px;color:#444;transform:scaleX(0.9600);transform-origin:0 0;">0.94%</div>
<div class="t" style="left:520.27px;top:110.34px;font-size:12.00px;color:#444;transform:scaleX(0.9600);transform-origin:0 0;">£33.96</div>
<div class="t" style="left:633.08px;top:110.34px;font-size:12.00px;color:#444;transform:scaleX(0.9600);transform-origin:0 0;">0.95</div>
<div class="a" style="left:159px;top:126px;width:501px;height:21px;background:#efefef;"></div>
<div class="a" style="left:0px;top:146px;width:661px;height:1px;background:#d9d9d9;"></div>
<div class="a" style="left:260px;top:126px;width:1px;height:21px;background:#d9d9d9;"></div>
<div class="a" style="left:360px;top:126px;width:1px;height:21px;background:#d9d9d9;"></div>
<div class="a" style="left:460px;top:126px;width:1px;height:21px;background:#d9d9d9;"></div>
<div class="a" style="left:560px;top:126px;width:1px;height:21px;background:#d9d9d9;"></div>
<div class="a" style="left:660px;top:126px;width:1px;height:21px;background:#d9d9d9;"></div>
<div class="t" style="left:4.00px;top:131.34px;font-size:12.00px;color:#444;transform:scaleX(0.9750);transform-origin:0 0;">07: Customers needing att...</div>
<div class="t" style="left:176.29px;top:131.34px;font-size:12.00px;color:#444;transform:scaleX(0.9600);transform-origin:0 0;">£11,140,622.03</div>
<div class="t" style="left:322.84px;top:131.34px;font-size:12.00px;color:#444;transform:scaleX(0.9600);transform-origin:0 0;">4.99%</div>
<div class="t" style="left:422.84px;top:131.34px;font-size:12.00px;color:#444;transform:scaleX(0.9600);transform-origin:0 0;">3.93%</div>
<div class="t" style="left:514.72px;top:131.34px;font-size:12.00px;color:#444;transform:scaleX(0.9600);transform-origin:0 0;">£115.88</div>
<div class="t" style="left:633.08px;top:131.34px;font-size:12.00px;color:#444;transform:scaleX(0.9600);transform-origin:0 0;">0.91</div>
<div class="a" style="left:159px;top:147px;width:501px;height:21px;background:#efefef;"></div>
<div class="a" style="left:0px;top:167px;width:661px;height:1px;background:#d9d9d9;"></div>
<div class="a" style="left:260px;top:147px;width:1px;height:21px;background:#d9d9d9;"></div>
<div class="a" style="left:360px;top:147px;width:1px;height:21px;background:#d9d9d9;"></div>
<div class="a" style="left:460px;top:147px;width:1px;height:21px;background:#d9d9d9;"></div>
<div class="a" style="left:560px;top:147px;width:1px;height:21px;background:#d9d9d9;"></div>
<div class="a" style="left:660px;top:147px;width:1px;height:21px;background:#d9d9d9;"></div>
<div class="t" style="left:4.00px;top:152.34px;font-size:12.00px;color:#444;transform:scaleX(0.9750);transform-origin:0 0;">08: About to sleep</div>
<div class="t" style="left:181.84px;top:152.34px;font-size:12.00px;color:#444;transform:scaleX(0.9600);transform-origin:0 0;">£1,421,920.48</div>
<div class="t" style="left:322.84px;top:152.34px;font-size:12.00px;color:#444;transform:scaleX(0.9600);transform-origin:0 0;">2.39%</div>
<div class="t" style="left:422.84px;top:152.34px;font-size:12.00px;color:#444;transform:scaleX(0.9600);transform-origin:0 0;">0.50%</div>
<div class="t" style="left:520.27px;top:152.34px;font-size:12.00px;color:#444;transform:scaleX(0.9600);transform-origin:0 0;">£30.93</div>
<div class="t" style="left:633.08px;top:152.34px;font-size:12.00px;color:#444;transform:scaleX(0.9600);transform-origin:0 0;">0.93</div>
<div class="a" style="left:159px;top:168px;width:501px;height:21px;background:#efefef;"></div>
<div class="a" style="left:0px;top:188px;width:661px;height:1px;background:#d9d9d9;"></div>
<div class="a" style="left:260px;top:168px;width:1px;height:21px;background:#d9d9d9;"></div>
<div class="a" style="left:360px;top:168px;width:1px;height:21px;background:#d9d9d9;"></div>
<div class="a" style="left:460px;top:168px;width:1px;height:21px;background:#d9d9d9;"></div>
<div class="a" style="left:560px;top:168px;width:1px;height:21px;background:#d9d9d9;"></div>
<div class="a" style="left:660px;top:168px;width:1px;height:21px;background:#d9d9d9;"></div>
<div class="t" style="left:4.00px;top:173.34px;font-size:12.00px;color:#444;transform:scaleX(0.9750);transform-origin:0 0;">09: At Risk</div>
<div class="t" style="left:175.43px;top:173.34px;font-size:12.00px;color:#444;transform:scaleX(0.9600);transform-origin:0 0;">£57,695,189.43</div>
<div class="t" style="left:322.84px;top:173.34px;font-size:12.00px;color:#444;transform:scaleX(0.9600);transform-origin:0 0;">5.57%</div>
<div class="t" style="left:416.43px;top:173.34px;font-size:12.00px;color:#444;transform:scaleX(0.9600);transform-origin:0 0;">20.35%</div>
<div class="t" style="left:513.86px;top:173.34px;font-size:12.00px;color:#444;transform:scaleX(0.9600);transform-origin:0 0;">£537.75</div>
<div class="t" style="left:633.08px;top:173.34px;font-size:12.00px;color:#444;transform:scaleX(0.9600);transform-origin:0 0;">0.01</div>
<div class="a" style="left:159px;top:189px;width:501px;height:21px;background:#efefef;"></div>
<div class="a" style="left:0px;top:209px;width:661px;height:1px;background:#d9d9d9;"></div>
<div class="a" style="left:260px;top:189px;width:1px;height:21px;background:#d9d9d9;"></div>
<div class="a" style="left:360px;top:189px;width:1px;height:21px;background:#d9d9d9;"></div>
<div class="a" style="left:460px;top:189px;width:1px;height:21px;background:#d9d9d9;"></div>
<div class="a" style="left:560px;top:189px;width:1px;height:21px;background:#d9d9d9;"></div>
<div class="a" style="left:660px;top:189px;width:1px;height:21px;background:#d9d9d9;"></div>
<div class="t" style="left:4.00px;top:194.34px;font-size:12.00px;color:#444;transform:scaleX(0.9750);transform-origin:0 0;">10: Hibernating</div>
<div class="t" style="left:175.43px;top:194.34px;font-size:12.00px;color:#444;transform:scaleX(0.9600);transform-origin:0 0;">£26,560,754.50</div>
<div class="t" style="left:316.43px;top:194.34px;font-size:12.00px;color:#444;transform:scaleX(0.9600);transform-origin:0 0;">12.32%</div>
<div class="t" style="left:422.84px;top:194.34px;font-size:12.00px;color:#444;transform:scaleX(0.9600);transform-origin:0 0;">9.37%</div>
<div class="t" style="left:514.72px;top:194.34px;font-size:12.00px;color:#444;transform:scaleX(0.9600);transform-origin:0 0;">£112.95</div>
<div class="t" style="left:633.08px;top:194.34px;font-size:12.00px;color:#444;transform:scaleX(0.9600);transform-origin:0 0;">0.01</div>
</div>
<div class="a" style="left:159px;top:316px;width:0px;height:0px;background:#fff;"></div>
<div class="a" style="left:834px;top:316px;width:16px;height:197px;background:#fff;"></div>
<div class="a" style="left:834px;top:332px;width:16px;height:116px;background:#c2c2c2;"></div>
<svg style="left:834px;top:316px" width="16" height="197" fill="none" stroke="#555" stroke-width="1.5">
<path d="M4.5 9.5 L8 6 L11.5 9.5"/><path d="M4.5 186.5 L8 190 L11.5 186.5"/></svg>
<div class="a" style="left:834px;top:316px;width:1px;height:197px;background:#f0f0f0;"></div>
<svg style="left:0;top:0" width="1600" height="830">
<defs>
<clipPath id="cE"><circle cx="1223.8" cy="335.2" r="85.8"/></clipPath>
<clipPath id="cP"><circle cx="1181" cy="421" r="85.8"/></clipPath>
<clipPath id="cT"><circle cx="1266.5" cy="421" r="85.8"/></clipPath>
</defs>
<circle cx="1223.8" cy="335.2" r="85.8" fill="#8fb4e2"/>
<circle cx="1181" cy="421" r="85.8" fill="#e3886a"/>
<circle cx="1266.5" cy="421" r="85.8" fill="#f6cf3c"/>
<g clip-path="url(#cE)"><circle cx="1181" cy="421" r="85.8" fill="#a89bb8"/><circle cx="1266.5" cy="421" r="85.8" fill="#a8cbd9"/></g>
<g clip-path="url(#cP)"><circle cx="1266.5" cy="421" r="85.8" fill="#f3b35c"/></g>
<g clip-path="url(#cE)"><g clip-path="url(#cP)"><circle cx="1266.5" cy="421" r="85.8" fill="#dba0bf"/></g></g>
</svg>
<div class="t" style="left:1184.00px;top:271.84px;font-size:12.00px;color:#222;font-weight:bold;transform:scaleX(0.9229);transform-origin:0 0;">Email Contacts</div>
<div class="t" style="left:1203.50px;top:287.92px;font-size:12.50px;color:#222;transform:scaleX(0.9075);transform-origin:0 0;">402,822</div>
<div class="t" style="left:1208.00px;top:303.53px;font-size:10.00px;color:#222;transform:scaleX(0.9436);transform-origin:0 0;">22.30%</div>
<div class="t" style="left:1155.00px;top:343.92px;font-size:12.50px;color:#222;transform:scaleX(0.9417);transform-origin:0 0;">20,327</div>
<div class="t" style="left:1160.50px;top:359.53px;font-size:10.00px;color:#222;transform:scaleX(0.8817);transform-origin:0 0;">1.13%</div>
<div class="t" style="left:1255.00px;top:343.92px;font-size:12.50px;color:#222;transform:scaleX(0.9075);transform-origin:0 0;">258,989</div>
<div class="t" style="left:1260.00px;top:359.53px;font-size:10.00px;color:#222;transform:scaleX(0.9141);transform-origin:0 0;">14.34%</div>
<div class="t" style="left:1203.50px;top:374.92px;font-size:12.50px;color:#222;transform:scaleX(0.9075);transform-origin:0 0;">396,124</div>
<div class="t" style="left:1208.00px;top:390.53px;font-size:10.00px;color:#222;transform:scaleX(0.9436);transform-origin:0 0;">21.93%</div>
<div class="t" style="left:1096.50px;top:400.34px;font-size:12.00px;color:#222;font-weight:bold;transform:scaleX(0.9153);transform-origin:0 0;">Postal Contacts</div>
<div class="t" style="left:1123.50px;top:416.42px;font-size:12.50px;color:#222;transform:scaleX(0.9272);transform-origin:0 0;">4,869</div>
<div class="t" style="left:1125.00px;top:432.53px;font-size:10.00px;color:#222;transform:scaleX(0.9170);transform-origin:0 0;">0.27%</div>
<div class="t" style="left:1282.00px;top:392.34px;font-size:12.00px;color:#222;font-weight:bold;transform:scaleX(0.9474);transform-origin:0 0;">Telephone</div>
<div class="t" style="left:1286.50px;top:408.34px;font-size:12.00px;color:#222;font-weight:bold;transform:scaleX(0.9155);transform-origin:0 0;">Contacts</div>
<div class="t" style="left:1289.50px;top:424.42px;font-size:12.50px;color:#222;transform:scaleX(0.9265);transform-origin:0 0;">209,011</div>
<div class="t" style="left:1294.50px;top:440.53px;font-size:10.00px;color:#222;transform:scaleX(0.9345);transform-origin:0 0;">11.57%</div>
<div class="t" style="left:1203.50px;top:430.42px;font-size:12.50px;color:#222;transform:scaleX(0.9075);transform-origin:0 0;">514,099</div>
<div class="t" style="left:1208.00px;top:446.03px;font-size:10.00px;color:#222;transform:scaleX(0.9436);transform-origin:0 0;">28.46%</div>
<svg style="left:0;top:0" width="1600" height="830">
<rect x="213.5" y="569.0" width="250" height="146.79999999999995" fill="#fff" stroke="#dedede" stroke-width="1"/>
<rect x="214" y="578.1" width="249" height="68.6" fill="#f4f4f4"/>
<line x1="213" y1="647.5" x2="463" y2="647.5" stroke="#d6d6d6" stroke-width="1"/>
<line x1="213" y1="578.5" x2="463" y2="578.5" stroke="#d6d6d6" stroke-width="1"/>
<line x1="208" y1="715.5" x2="213" y2="715.5" stroke="#c8c8c8" stroke-width="1"/>
<line x1="210.8" y1="702.5" x2="213" y2="702.5" stroke="#e0e0e0" stroke-width="1"/>
<line x1="210.8" y1="688.5" x2="213" y2="688.5" stroke="#e0e0e0" stroke-width="1"/>
<line x1="210.8" y1="674.5" x2="213" y2="674.5" stroke="#e0e0e0" stroke-width="1"/>
<line x1="210.8" y1="660.5" x2="213" y2="660.5" stroke="#e0e0e0" stroke-width="1"/>
<line x1="208" y1="647.5" x2="213" y2="647.5" stroke="#c8c8c8" stroke-width="1"/>
<line x1="210.8" y1="633.5" x2="213" y2="633.5" stroke="#e0e0e0" stroke-width="1"/>
<line x1="210.8" y1="619.5" x2="213" y2="619.5" stroke="#e0e0e0" stroke-width="1"/>
<line x1="210.8" y1="606.5" x2="213" y2="606.5" stroke="#e0e0e0" stroke-width="1"/>
<line x1="210.8" y1="592.5" x2="213" y2="592.5" stroke="#e0e0e0" stroke-width="1"/>
<line x1="208" y1="578.5" x2="213" y2="578.5" stroke="#c8c8c8" stroke-width="1"/>
<line x1="207" y1="715.3" x2="463" y2="715.3" stroke="#bfcfe0" stroke-width="1.2"/>
<line x1="213.5" y1="568.5" x2="213.5" y2="715.3" stroke="#d8d8d8" stroke-width="1"/>
<rect x="221.7" y="599.4" width="5.2" height="115.9" fill="#e0673b"/>
<rect x="227.8" y="614.8" width="5.2" height="100.5" fill="#f0a22f"/>
<line x1="222.9" y1="715.3" x2="222.9" y2="720.3" stroke="#bfcfe0" stroke-width="1"/>
<rect x="242.5" y="622.0" width="5.2" height="93.3" fill="#e0673b"/>
<rect x="248.6" y="622.0" width="5.2" height="93.3" fill="#f0a22f"/>
<line x1="243.8" y1="715.3" x2="243.8" y2="720.3" stroke="#bfcfe0" stroke-width="1"/>
<rect x="263.4" y="616.9" width="5.2" height="98.4" fill="#e0673b"/>
<rect x="269.5" y="603.8" width="5.2" height="111.5" fill="#f0a22f"/>
<line x1="264.6" y1="715.3" x2="264.6" y2="720.3" stroke="#bfcfe0" stroke-width="1"/>
<rect x="284.2" y="617.9" width="5.2" height="97.4" fill="#e0673b"/>
<rect x="290.3" y="610.0" width="5.2" height="105.3" fill="#f0a22f"/>
<line x1="285.4" y1="715.3" x2="285.4" y2="720.3" stroke="#bfcfe0" stroke-width="1"/>
<rect x="305.0" y="616.9" width="5.2" height="98.4" fill="#e0673b"/>
<rect x="311.1" y="605.9" width="5.2" height="109.4" fill="#f0a22f"/>
<line x1="306.2" y1="715.3" x2="306.2" y2="720.3" stroke="#bfcfe0" stroke-width="1"/>
<rect x="325.9" y="618.9" width="5.2" height="96.4" fill="#e0673b"/>
<rect x="332.0" y="639.8" width="5.2" height="75.5" fill="#f0a22f"/>
<line x1="327.1" y1="715.3" x2="327.1" y2="720.3" stroke="#bfcfe0" stroke-width="1"/>
<rect x="340.2" y="609.7" width="5.2" height="105.6" fill="#4b87c6"/>
<rect x="346.7" y="600.7" width="5.2" height="114.6" fill="#e0673b"/>
<line x1="347.9" y1="715.3" x2="347.9" y2="720.3" stroke="#bfcfe0" stroke-width="1"/>
<rect x="361.0" y="613.8" width="5.2" height="101.5" fill="#4b87c6"/>
<rect x="367.5" y="590.8" width="5.2" height="124.5" fill="#e0673b"/>
<line x1="368.8" y1="715.3" x2="368.8" y2="720.3" stroke="#bfcfe0" stroke-width="1"/>
<rect x="381.9" y="609.0" width="5.2" height="106.3" fill="#4b87c6"/>
<rect x="388.4" y="581.9" width="5.2" height="133.4" fill="#e0673b"/>
<line x1="389.6" y1="715.3" x2="389.6" y2="720.3" stroke="#bfcfe0" stroke-width="1"/>
<rect x="402.7" y="617.9" width="5.2" height="97.4" fill="#4b87c6"/>
<rect x="409.2" y="597.7" width="5.2" height="117.6" fill="#e0673b"/>
<line x1="410.4" y1="715.3" x2="410.4" y2="720.3" stroke="#bfcfe0" stroke-width="1"/>
<rect x="423.5" y="601.8" width="5.2" height="113.5" fill="#4b87c6"/>
<rect x="430.0" y="612.7" width="5.2" height="102.6" fill="#e0673b"/>
<line x1="431.2" y1="715.3" x2="431.2" y2="720.3" stroke="#bfcfe0" stroke-width="1"/>
<rect x="444.4" y="594.9" width="5.2" height="120.4" fill="#4b87c6"/>
<rect x="450.9" y="634.7" width="5.2" height="80.6" fill="#e0673b"/>
<line x1="452.1" y1="715.3" x2="452.1" y2="720.3" stroke="#bfcfe0" stroke-width="1"/>
<rect x="514.5" y="569.5" width="71" height="77" fill="#fff" stroke="#d4d4d4" stroke-width="1"/>
<rect x="529" y="582.5" width="11.5" height="11.5" fill="#4b87c6"/>
<rect x="529" y="602.6" width="11.5" height="11.5" fill="#e0673b"/>
<rect x="529" y="622.7" width="11.5" height="11.5" fill="#f0a22f"/>
</svg>
<div class="t" style="left:545.50px;top:582.64px;font-size:12.00px;color:#3c3c3c;transform:scaleX(0.9741);transform-origin:0 0;">2020</div>
<div class="t" style="left:545.50px;top:602.74px;font-size:12.00px;color:#3c3c3c;transform:scaleX(0.9741);transform-origin:0 0;">2021</div>
<div class="t" style="left:545.50px;top:622.84px;font-size:12.00px;color:#3c3c3c;transform:scaleX(0.9741);transform-origin:0 0;">2022</div>
<div class="t" style="left:167.50px;top:572.84px;font-size:12.00px;color:#444;transform:scaleX(0.9809);transform-origin:0 0;">40,000</div>
<div class="t" style="left:167.50px;top:640.64px;font-size:12.00px;color:#444;transform:scaleX(0.9809);transform-origin:0 0;">20,000</div>
<div class="t" style="left:196.83px;top:709.34px;font-size:12.00px;color:#444;">0</div>
<div class="t" style="left:141.0px;top:693.5px;font-size:16px;color:#4a7fc8;transform:rotate(-90deg) scaleX(0.988);transform-origin:0 0;-webkit-text-stroke:0.2px #fff">Count Contact</div>
<div class="t" style="left:229.4px;top:726px;font-size:11.6px;color:#444;transform:rotate(90deg);transform-origin:0 0;">01: January</div>
<div class="t" style="left:250.2px;top:726px;font-size:11.6px;color:#444;transform:rotate(90deg);transform-origin:0 0;">02: February</div>
<div class="t" style="left:271.1px;top:726px;font-size:11.6px;color:#444;transform:rotate(90deg);transform-origin:0 0;">03: March</div>
<div class="t" style="left:291.9px;top:726px;font-size:11.6px;color:#444;transform:rotate(90deg);transform-origin:0 0;">04: April</div>
<div class="t" style="left:312.8px;top:726px;font-size:11.6px;color:#444;transform:rotate(90deg);transform-origin:0 0;">05: May</div>
<div class="t" style="left:333.6px;top:726px;font-size:11.6px;color:#444;transform:rotate(90deg);transform-origin:0 0;">06: June</div>
<div class="t" style="left:354.4px;top:726px;font-size:11.6px;color:#444;transform:rotate(90deg);transform-origin:0 0;">07: July</div>
<div class="t" style="left:375.2px;top:726px;font-size:11.6px;color:#444;transform:rotate(90deg);transform-origin:0 0;">08: August</div>
<div class="t" style="left:396.1px;top:726px;font-size:11.6px;color:#444;transform:rotate(90deg);transform-origin:0 0;">09: September</div>
<div class="t" style="left:416.9px;top:726px;font-size:11.6px;color:#444;transform:rotate(90deg);transform-origin:0 0;">10: October</div>
<div class="t" style="left:437.8px;top:726px;font-size:11.6px;color:#444;transform:rotate(90deg);transform-origin:0 0;">11: November</div>
<div class="t" style="left:458.6px;top:726px;font-size:11.6px;color:#444;transform:rotate(90deg);transform-origin:0 0;">12: December</div>
<div class="t" style="left:663.33px;top:585.70px;font-size:131.27px;color:#3a3a3a;transform:scaleX(0.9107);transform-origin:0 0;-webkit-text-stroke:4.60px #fff">9</div>
<div class="t" style="left:727.16px;top:585.70px;font-size:131.27px;color:#3a3a3a;transform:scaleX(0.8948);transform-origin:0 0;-webkit-text-stroke:4.60px #fff">9</div>
<div class="t" style="left:817.53px;top:585.70px;font-size:131.27px;color:#3a3a3a;transform:scaleX(0.9107);transform-origin:0 0;-webkit-text-stroke:4.60px #fff">9</div>
<div class="t" style="left:885.74px;top:585.70px;font-size:131.27px;color:#3a3a3a;transform:scaleX(0.7757);transform-origin:0 0;-webkit-text-stroke:4.60px #fff">5</div>
<div class="t" style="left:1165.79px;top:585.70px;font-size:131.27px;color:#3a3a3a;transform:scaleX(0.8925);transform-origin:0 0;-webkit-text-stroke:4.60px #fff">2</div>
<div class="t" style="left:1228.25px;top:585.70px;font-size:131.27px;color:#3a3a3a;transform:scaleX(0.9945);transform-origin:0 0;-webkit-text-stroke:4.60px #fff">4</div>
<div class="t" style="left:1322.47px;top:585.70px;font-size:131.27px;color:#3a3a3a;transform:scaleX(0.9054);transform-origin:0 0;-webkit-text-stroke:4.60px #fff">9</div>
<div class="t" style="left:711.60px;top:739.64px;font-size:72.39px;color:#3a3a3a;transform:scaleX(0.9332);transform-origin:0 0;-webkit-text-stroke:2.40px #fff">2</div>
<div class="t" style="left:758.85px;top:739.64px;font-size:72.39px;color:#3a3a3a;transform:scaleX(1.0379);transform-origin:0 0;-webkit-text-stroke:2.40px #fff">0</div>
<div class="t" style="left:797.86px;top:739.64px;font-size:72.39px;color:#3a3a3a;transform:scaleX(1.0090);transform-origin:0 0;-webkit-text-stroke:2.40px #fff">4</div>
<div class="t" style="left:835.24px;top:739.64px;font-size:72.39px;color:#3a3a3a;transform:scaleX(0.9037);transform-origin:0 0;-webkit-text-stroke:2.40px #fff">2</div>
<div class="t" style="left:886.60px;top:739.64px;font-size:72.39px;color:#3a3a3a;transform:scaleX(0.9546);transform-origin:0 0;-webkit-text-stroke:2.40px #fff">6</div>
<div class="t" style="left:921.60px;top:739.64px;font-size:72.39px;color:#3a3a3a;transform:scaleX(0.9546);transform-origin:0 0;-webkit-text-stroke:2.40px #fff">6</div>
<div class="t" style="left:958.74px;top:739.64px;font-size:72.39px;color:#3a3a3a;transform:scaleX(0.8443);transform-origin:0 0;-webkit-text-stroke:2.40px #fff">3</div>
<div class="t" style="left:1234.20px;top:739.64px;font-size:72.39px;color:#3a3a3a;transform:scaleX(0.8066);transform-origin:0 0;-webkit-text-stroke:2.40px #fff">5</div>
<div class="t" style="left:1268.20px;top:739.64px;font-size:72.39px;color:#3a3a3a;transform:scaleX(0.9035);transform-origin:0 0;-webkit-text-stroke:2.40px #fff">0</div>
<div class="t" style="left:1303.94px;top:739.64px;font-size:72.39px;color:#3a3a3a;transform:scaleX(0.8664);transform-origin:0 0;-webkit-text-stroke:2.40px #fff">8</div>
<div class="t" style="left:1354.75px;top:739.64px;font-size:72.39px;color:#3a3a3a;transform:scaleX(0.8632);transform-origin:0 0;-webkit-text-stroke:2.40px #fff">8</div>
<div class="t" style="left:1389.21px;top:739.64px;font-size:72.39px;color:#3a3a3a;transform:scaleX(0.9942);transform-origin:0 0;-webkit-text-stroke:2.40px #fff">4</div>
<div class="t" style="left:1427.24px;top:739.64px;font-size:72.39px;color:#3a3a3a;transform:scaleX(0.9004);transform-origin:0 0;-webkit-text-stroke:2.40px #fff">9</div>
<svg style="left:0;top:0" width="1600" height="830" fill="none" stroke="#3a3a3a" stroke-width="5.6"><g transform="translate(0,0)"><ellipse cx="970.7" cy="628.3" rx="17.1" ry="18.9"/><ellipse cx="1017.7" cy="673.4" rx="17.1" ry="19.1"/><path d="M1014.8 607.5 H1021.5 L972 695.5 H965.3 Z" fill="#3a3a3a" stroke="none"/></g><g transform="translate(485.1,0)"><ellipse cx="970.7" cy="628.3" rx="17.1" ry="18.9"/><ellipse cx="1017.7" cy="673.4" rx="17.1" ry="19.1"/><path d="M1014.8 607.5 H1021.5 L972 695.5 H965.3 Z" fill="#3a3a3a" stroke="none"/></g><circle cx="805.3" cy="690" r="5.1" fill="#3a3a3a" stroke="none"/><circle cx="1310.4" cy="690" r="5.1" fill="#3a3a3a" stroke="none"/><path d="M1413 606 H1419.3 V695 H1413 V614.5 L1391.8 626 V620 Z" fill="#3a3a3a" stroke="none"/><g stroke-width="3.4"><line x1="757" y1="791.8" x2="751.8" y2="807.3"/><line x1="880.5" y1="791.8" x2="875.3" y2="807.3"/><line x1="1347.8" y1="791.8" x2="1342.8" y2="807.3"/></g></svg>
</body></html>
